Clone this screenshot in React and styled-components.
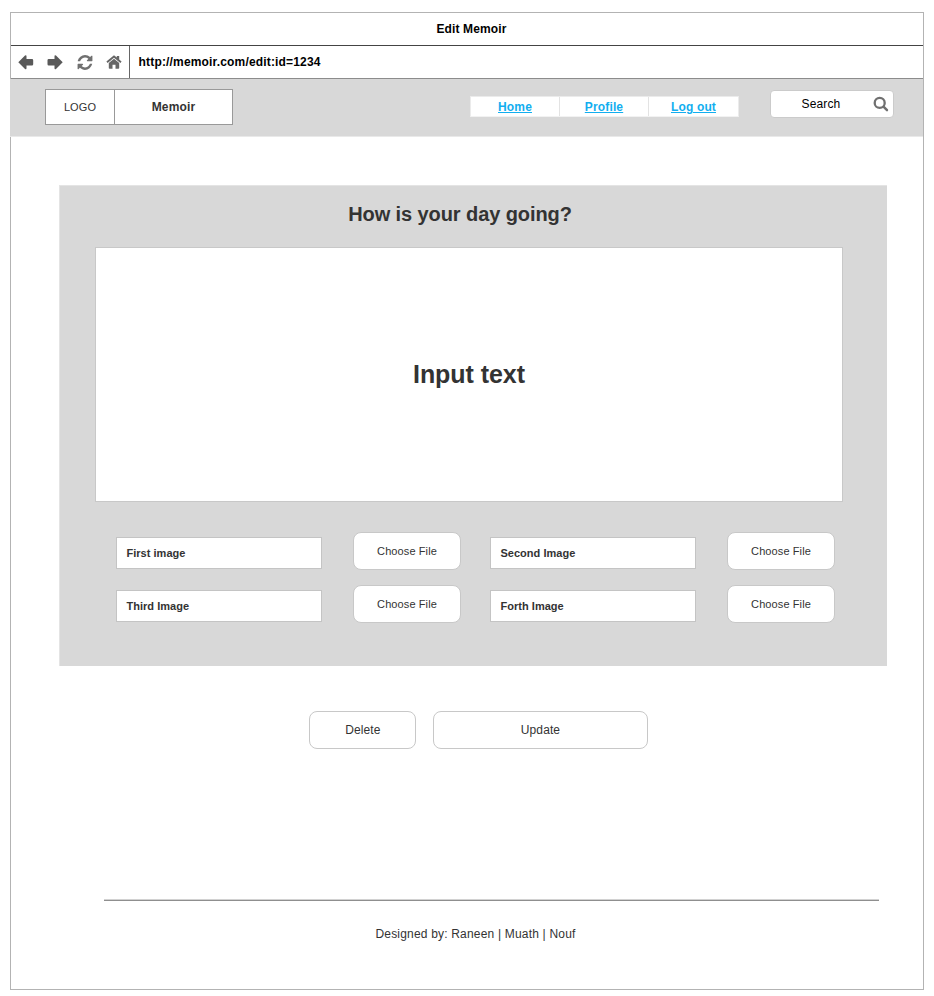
import React from "react";
import styled, { createGlobalStyle } from "styled-components";

const GlobalStyle = createGlobalStyle`
  * { box-sizing: border-box; }
  body {
    margin: 0;
    background: #fff;
    color: #333;
    font-family: "Liberation Sans", Arial, sans-serif;
    font-size: 12px;
    line-height: 14px;
  }
`;

const Window = styled.main`
  width: 914px;
  height: 978px;
  margin: 12px 0 0 10px;
  border: 1px solid #b3b3b3;
  display: flex;
  flex-direction: column;
`;

const TitleBar = styled.div`
  height: 33px;
  flex: none;
  padding: 9px 0 0 9px;
  text-align: center;
  font-weight: bold;
  letter-spacing: 0.13px;
  color: #000;
  border-bottom: 1px solid #444;
`;

const AddressBar = styled.div`
  height: 33px;
  flex: none;
  display: flex;
  border-bottom: 1px solid #8c8c8c;
`;

const BrowserButtons = styled.div`
  width: 119px;
  display: flex;
  align-items: center;
  gap: 13.6px;
  padding-left: 6.7px;
  border-right: 1px solid #666;
`;

const ToolIcon = styled.svg`
  width: 16px;
  height: 16px;
  flex: none;
  display: block;
  fill: ${(p) => p.$color || "#595959"};
`;

const Url = styled.div`
  padding: 9px 0 0 8.6px;
  font-weight: bold;
  letter-spacing: 0.165px;
  color: #000;
`;

const Header = styled.header`
  height: 58px;
  flex: none;
  display: flex;
  align-items: flex-start;
  margin-left: -1px;
  padding-left: 35px;
  background: #d8d8d8;
  border-bottom: 1px solid #e9e9e9;
`;

const Brand = styled.div`
  display: flex;
  width: 188px;
  height: 36px;
  margin-top: 10px;
  background: #fff;
  border: 1px solid #999;
`;

const Logo = styled.div`
  width: 69px;
  padding-top: 10px;
  text-align: center;
  font-size: 11px;
  letter-spacing: 0.1px;
  border-right: 1px solid #999;
`;

const BrandName = styled.div`
  flex: 1;
  padding-top: 10px;
  text-align: center;
  font-weight: bold;
  letter-spacing: 0.15px;
`;

const Nav = styled.nav`
  display: grid;
  grid-template-columns: 88px 89px 90px;
  width: 269px;
  height: 21px;
  margin: 17px 0 0 237px;
  background: #fff;
  border: 1px solid #ebebeb;
  border-bottom-color: #f2f2f2;
`;

const NavLink = styled.a`
  padding-top: 3px;
  text-align: center;
  font-weight: bold;
  letter-spacing: 0.15px;
  color: #12aeef;
  text-decoration: underline;
  border-left: ${(p) => (p.$first ? "none" : "1px solid #e3e3e3")};
`;

const SearchBox = styled.div`
  width: 124px;
  height: 28px;
  margin: 11px 0 0 31px;
  display: flex;
  background: #fff;
  border: 1px solid #cbcbcb;
  border-radius: 4px;
  color: #000;
`;

const SearchText = styled.span`
  width: 102px;
  padding: 6px 2px 0 0;
  text-align: center;
  letter-spacing: 0.13px;
`;

const SearchIcon = styled.svg`
  width: 16px;
  height: 16px;
  margin-top: 5px;
  fill: none;
  stroke: #707070;
`;

const Editor = styled.section`
  width: 828px;
  height: 481px;
  flex: none;
  margin: 48px 0 0 48px;
  padding-left: 35px;
  background: #d8d8d8;
  border: solid #e4e4e4;
  border-width: 1px 0 0 1px;
`;

const Question = styled.h1`
  width: 730px;
  height: 61px;
  margin: 0;
  padding-top: 16px;
  text-align: center;
  font-size: 20px;
  line-height: 24px;
  letter-spacing: -0.09px;
`;

const TextArea = styled.div`
  width: 748px;
  height: 255px;
  display: flex;
  align-items: center;
  justify-content: center;
  padding-bottom: 2px;
  background: #fff;
  border: 1px solid #c8c8c8;
  font-size: 25px;
  font-weight: bold;
  letter-spacing: -0.05px;
`;

const Uploads = styled.div`
  display: grid;
  grid-template-columns: repeat(2, 237px 137px);
  row-gap: 15px;
  margin: 30px 0 0 21px;
`;

const FileName = styled.div`
  width: 206px;
  height: 32px;
  margin-top: 5px;
  padding: 8px 0 0 9.4px;
  background: #fff;
  border: 1px solid #c4c4c4;
  font-size: 11px;
  font-weight: bold;
  letter-spacing: 0.04px;
`;

const Button = styled.button`
  width: ${(p) => p.$width || 108}px;
  height: 38px;
  padding: 0 0 1px;
  background: #fff;
  border: 1px solid #c8c8c8;
  border-radius: 8px;
  color: #333;
  font: ${(p) => (p.$small ? 11 : 12)}px "Liberation Sans", Arial, sans-serif;
  letter-spacing: 0.1px;
`;

const Actions = styled.div`
  display: flex;
  gap: 16.7px;
  margin: 45px 0 0 298.3px;
`;

const Footer = styled.footer`
  width: 775px;
  margin: 150px 0 0 93px;
  padding: 27px 32px 0 0;
  border-top: 1px solid #d2d2d2;
  box-shadow: inset 0 1px 0 #8f8f8f;
  text-align: center;
  letter-spacing: 0.19px;
`;

const files = ["First image", "Second Image", "Third Image", "Forth Image"];

export default function App() {
  return (
    <>
      <GlobalStyle />
      <Window>
        <TitleBar>Edit Memoir</TitleBar>
        <AddressBar>
          <BrowserButtons>
            <ToolIcon viewBox="0 0 16 16">
              <path d="M0.3 8.300 7 1.600Q8.500 .8 8.500 2.300V5H14Q15.200 5 15.200 6.200V10.300Q15.200 11.500 14 11.500H8.500V14.300Q8.500 15.800 7 15Z" />
            </ToolIcon>
            <ToolIcon viewBox="0 0 16 16">
              <path d="M15.700 8.300 9 1.600Q7.500 .8 7.500 2.300V5H1.700Q.5 5 .5 6.200V10.300Q.5 11.500 1.700 11.500H7.500V14.300Q7.500 15.800 9 15Z" />
            </ToolIcon>
            <ToolIcon $color="#707070" viewBox="-60 -110 1656 1656">
              <path d="M1511 928q0 5-1 7-64 268-268 434.500T764 1536q-146 0-282.500-55T238 1324l-129 129q-19 19-45 19t-45-19-19-45V960q0-26 19-45t45-19h448q26 0 45 19t19 45-19 45l-137 137q71 66 161 102t187 36q134 0 250-65t186-179q11-17 53-117 8-23 30-23h192q13 0 22.500 9.500t9.500 22.500zm25-800v448q0 26-19 45t-45 19h-448q-26 0-45-19t-19-45 19-45l138-138Q969 256 768 256q-134 0-250 65T332 500q-11 17-53 117-8 23-30 23H50q-13 0-22.500-9.500T18 608v-7q65-268 270-434.500T768 0q146 0 284 55.500T1297 212l130-129q19-19 45-19t45 19 19 45z" />
            </ToolIcon>
            <ToolIcon $color="#666" viewBox="0 0 16 16">
              <path d="M8 4.800 13.200 9V14Q13.200 14.800 12.400 14.800H9.500V10.800H6.500V14.800H3.600Q2.800 14.800 2.800 14V9ZM8 1.300 10.800 3.600V1.900H13.200V5.600L15.600 7.600 14.400 9 8 3.800 1.600 9 .4 7.600Z" />
            </ToolIcon>
          </BrowserButtons>
          <Url>http://memoir.com/edit:id=1234</Url>
        </AddressBar>
        <Header>
          <Brand>
            <Logo>LOGO</Logo>
            <BrandName>Memoir</BrandName>
          </Brand>
          <Nav>
            <NavLink $first>Home</NavLink>
            <NavLink>Profile</NavLink>
            <NavLink>Log out</NavLink>
          </Nav>
          <SearchBox>
            <SearchText>Search</SearchText>
            <SearchIcon viewBox="0 0 16 16">
              <circle cx="6.700" cy="6.900" r="5" strokeWidth="2.300" />
              <path d="M10.500 10.700 14 14.200" strokeWidth="2.400" strokeLinecap="round" />
            </SearchIcon>
          </SearchBox>
        </Header>
        <Editor>
          <Question>How is your day going?</Question>
          <TextArea>Input text</TextArea>
          <Uploads>
            {files.map((name) => (
              <React.Fragment key={name}>
                <FileName>{name}</FileName>
                <Button $small>Choose File</Button>
              </React.Fragment>
            ))}
          </Uploads>
        </Editor>
        <Actions>
          <Button $width={107}>Delete</Button>
          <Button $width={215}>Update</Button>
        </Actions>
        <Footer>Designed by: Raneen | Muath | Nouf</Footer>
      </Window>
    </>
  );
}
